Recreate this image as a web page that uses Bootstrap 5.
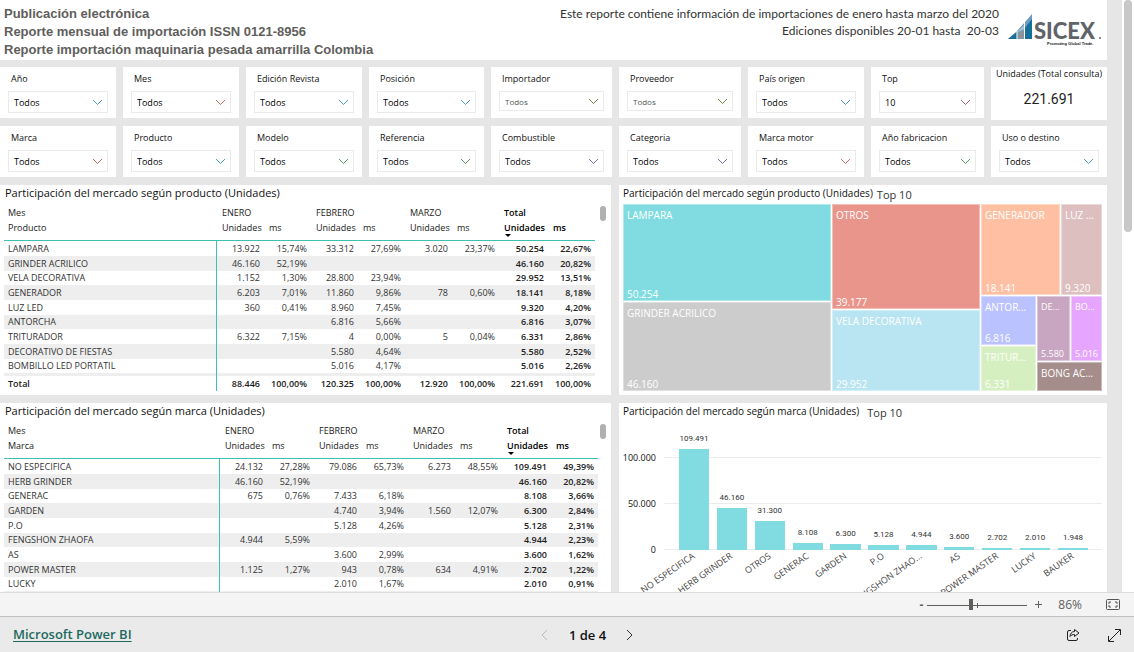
<!DOCTYPE html>
<html lang="es">
<head>
<meta charset="utf-8">
<meta name="viewport" content="width=device-width, initial-scale=1">
<title>Reporte mensual de importación</title>
<link rel="stylesheet" href="https://cdn.jsdelivr.net/npm/bootstrap@5.3.0/dist/css/bootstrap.min.css">
<script src="https://cdn.jsdelivr.net/npm/bootstrap@5.3.0/dist/js/bootstrap.bundle.min.js"></script>
<style>
  :root { --teal: #3cbfb4; --bar: #80dce0; }
  body { font-family: "Open Sans", "Noto Sans", sans-serif; font-size: 9px; line-height: 14px; color: #111; background: #fff; }
  h1, h2, p { margin: 0; }
  .report { background: #e6e6e6; padding-right: 15px; }
  .page-head { height: 60px; padding: 5px 5px 0 4px; }
  .page-head h1 { font: bold 13px/18px "Liberation Sans", Arial, sans-serif; color: #605e5c; white-space: nowrap; }
  .page-head p { font: 12px/17px Lato, "Open Sans", sans-serif; color: #333; white-space: pre; }
  .logo { width: 94px; height: 36px; margin: 6px 0 0 9px; }

  .filters { display: grid; grid-template-columns: 116fr 116fr 116fr 115fr 121fr 122fr 116fr 113fr 116fr; gap: 8px 7px; margin-top: 7px; }
  .slicer { background: #fff; padding: 5px 8px 6px; height: 51px; min-width: 0; }
  .slicer label { display: block; padding-left: 3px; margin-bottom: 5px; white-space: nowrap; color: #111; }
  .slicer select { -webkit-appearance: none; appearance: none; display: block; width: 100%; height: 22px; border: 1px solid #eaeaea; border-radius: 0; padding: 1px 20px 0 5px; font-size: 9px; line-height: 19px; color: #000; background: #fff no-repeat right 4px center; background-size: 11px 7px; }
  .slicer select.muted { font-size: 8px; color: #555; height: 20px; padding-top: 0; }
  .c-blue { background-image: url("data:image/svg+xml,%3Csvg xmlns='http://www.w3.org/2000/svg' viewBox='0 0 11 7'%3E%3Cpath d='M1 1l4.500 4.500L10 1' fill='none' stroke='%234a9cc9'/%3E%3C/svg%3E") !important; }
  .c-red { background-image: url("data:image/svg+xml,%3Csvg xmlns='http://www.w3.org/2000/svg' viewBox='0 0 11 7'%3E%3Cpath d='M1 1l4.500 4.500L10 1' fill='none' stroke='%23c9695a'/%3E%3C/svg%3E") !important; }
  .c-green { background-image: url("data:image/svg+xml,%3Csvg xmlns='http://www.w3.org/2000/svg' viewBox='0 0 11 7'%3E%3Cpath d='M1 1l4.500 4.500L10 1' fill='none' stroke='%23559568'/%3E%3C/svg%3E") !important; }
  .c-olive { background-image: url("data:image/svg+xml,%3Csvg xmlns='http://www.w3.org/2000/svg' viewBox='0 0 11 7'%3E%3Cpath d='M1 1l4.500 4.500L10 1' fill='none' stroke='%236b8a3a'/%3E%3C/svg%3E") !important; }
  .c-purple { background-image: url("data:image/svg+xml,%3Csvg xmlns='http://www.w3.org/2000/svg' viewBox='0 0 11 7'%3E%3Cpath d='M1 1l4.500 4.500L10 1' fill='none' stroke='%237466b5'/%3E%3C/svg%3E") !important; }
  .c-rose { background-image: url("data:image/svg+xml,%3Csvg xmlns='http://www.w3.org/2000/svg' viewBox='0 0 11 7'%3E%3Cpath d='M1 1l4.500 4.500L10 1' fill='none' stroke='%23a8607c'/%3E%3C/svg%3E") !important; }
  .kpi { background: #fff; height: 53px; text-align: center; white-space: nowrap; margin-bottom: -2px; }
  .kpi strong { display: block; font: 14px/16px Roboto, sans-serif; color: #222; margin-top: 10px; }

  .panels { display: grid; grid-template-columns: 611fr 488fr; gap: 8px; margin-top: 8px; }
  .panel { background: #fff; min-width: 0; height: 210px; padding: 0 5px 0 4px; }
  .panel h2 { font-size: 11px; line-height: 16px; color: #111; white-space: nowrap; padding-left: 1px; }
  .panel h2.narrow { font-size: 10px; padding-left: 0; }
  .panel h2 small { font-size: 11px; line-height: 20px; height: 16px; color: #333; margin-left: 4px; }

  .matrix { width: 100%; table-layout: fixed; border-collapse: separate; border-spacing: 0; margin-top: 4px; }
  .matrix th, .matrix td { padding: 0 4px 0 5px; height: 15px; line-height: 15px; white-space: nowrap; font-weight: 400; text-align: right; color: #333; }
  .matrix thead th { text-align: left; color: #222; position: relative; }
  .matrix thead tr:last-child th { height: 21px; padding-bottom: 5px; border-bottom: 1px solid var(--teal); }
  .matrix tbody tr:nth-child(3n) th, .matrix tbody tr:nth-child(3n) td { height: 14px; line-height: 14px; }
  .matrix tbody tr:nth-child(even) > * { background: #eee; }
  .matrix tr > :first-child { text-align: left; padding-left: 4px; }
  .matrix tbody tr > :first-child, .matrix tfoot tr > :first-child { border-right: 1px solid var(--teal); }
  .matrix .tot, .matrix tfoot tr > * { font-weight: 600; color: #222; }
  .matrix thead .tot { color: #000; }
  .matrix tbody tr.cut > * { height: 3px !important; line-height: 0 !important; }
  .matrix col.u { width: 47px; }
  .matrix col.tu { width: 49px; }
  .sort { position: absolute; left: 6px; top: 14px; border: 3px solid transparent; border-top-color: #000; border-bottom: 0; }
  .thumb { width: 6px; height: 15px; border-radius: 3px; background: #b0b0b0; margin: 5px 0 0 5px; flex: none; }
  .thumb.near { margin-left: 2px; }

  .treemap { height: 187px; margin-top: 3px; gap: 1px; color: #fff; font-size: 10px; }
  .treemap .g { display: flex; gap: 1px; min-width: 0; min-height: 0; flex-basis: 0; }
  .tile { display: flex; flex-direction: column; justify-content: space-between; min-width: 0; min-height: 0; flex-basis: 0; box-shadow: inset 0 0 0 1px rgba(255,255,255,.4); }
  .tile span { white-space: nowrap; flex: none; padding-left: 4px; }
  .tile span:first-child { padding-top: 4px; }
  .tile.dense span { font-size: 9px; }

  .axis { width: 33px; text-align: right; margin-top: 16px; }
  .axis div { height: 46px; line-height: 46px; font-size: 9px; margin-left: -4px; }
  .plot { height: 115px; margin: 16px 0 0 8px; padding: 0 10px 0 11px; background: repeating-linear-gradient(to top, #ececec 0 1px, transparent 1px 46px); }
  .slot { flex: 1 1 0; min-width: 0; height: 115px; position: relative; display: flex; flex-direction: column; justify-content: flex-end; align-items: center; }
  .slot .val { font: 8px/12px Roboto, sans-serif; color: #333; margin-bottom: 4px; flex: none; }
  .slot .col-bar { width: 80%; background: var(--bar); flex: none; }
  .slot .cat { position: absolute; top: 115px; right: 60%; transform: rotate(-35deg); transform-origin: top right; white-space: nowrap; color: #444; font-size: 9px; line-height: 12px; }

  .gutter { width: 12px; flex: none; background: #fff; padding: 0 2px; }
  .gutter div { height: 232px; background: #c8c8c8; border-radius: 4px; }
  .zoombar { height: 24px; background: #f4f4f4; border-top: 1px solid #dcdcdc; padding: 0 14px 0 0; color: #605e5c; font-size: 12px; line-height: 22px; }
  .zoombar button, .status button { border: 0; background: none; padding: 0; color: inherit; line-height: inherit; display: flex; align-items: center; justify-content: center; }
  .zoombar input { -webkit-appearance: none; appearance: none; width: 100px; height: 12px; margin: 0; background: linear-gradient(#605e5c, #605e5c) 0 6px / 100% 1px no-repeat, linear-gradient(#605e5c, #605e5c) 50px 4px / 1px 5px no-repeat; }
  .zoombar input::-webkit-slider-thumb { -webkit-appearance: none; width: 4px; height: 11px; background: #605e5c; }
  .status { height: 36px; background: #eaeaea; border-top: 1px solid #c0c0c0; padding: 1px 13px 0; color: #222; }
  .status a { color: #1c6a60; font-size: 13px; font-weight: 600; text-underline-offset: 2px; }
  .status nav { margin-left: 41px; gap: 18px; }
  .status .pg { font-size: 13px; font-weight: 600; color: #111; white-space: nowrap; }
</style>
</head>
<body class="d-flex flex-column vh-100 overflow-hidden">
<div class="d-flex flex-grow-1 overflow-hidden">
  <main class="report flex-grow-1 overflow-hidden">
    <header class="page-head bg-white d-flex">
      <h1 class="flex-grow-1">Publicación electrónica<br>Reporte mensual de importación ISSN 0121-8956<br>Reporte importación maquinaria pesada amarrilla Colombia</h1>
      <div class="text-end"><p>Este reporte contiene información de importaciones de enero hasta marzo del 2020</p><p>Ediciones disponibles 20-01 hasta  20-03</p></div>
      <svg class="logo flex-shrink-0" viewBox="0 0 94 36" role="img" aria-label="SICEX">
        <path d="M0 28L9 20 17 11 24 3V28z" fill="#6b9bbd"/>
        <path d="M0 28l9-7v7z" fill="#1c6d96"/><path d="M10 28v-6l6-3v9z" fill="#8b9299"/><path d="M10 20l7-7v5l-7 3z" fill="#a9c0d3"/><path d="M17 28V17l7-9v20z" fill="#146f9b"/>
        <path d="M9 20V28M16.500 11V28" stroke="#fff"/>
        <text x="26" y="28" font-family="Lato" font-weight="900" font-size="22" fill="#606468">SICEX</text>
        <circle cx="92" cy="27" r="1" fill="#606468"/>
        <text x="39" y="34" font-family="Liberation Sans" font-size="4" font-weight="bold" fill="#222">Promoting Global Trade.</text>
      </svg>
    </header>

    <section class="filters" id="filters" aria-label="Filtros"></section>

    <section class="panels">
      <article class="panel">
        <h2>Participación del mercado según producto (Unidades)</h2>
        <div class="d-flex"><div class="flex-grow-1"><table class="matrix" id="byProduct"></table></div><div class="thumb"></div></div>
      </article>
      <article class="panel">
        <h2 class="narrow d-flex">Participación del mercado según producto (Unidades)<small>Top 10</small></h2>
        <div class="treemap d-flex">
          <div class="g flex-column" style="flex-grow:208">
            <div class="tile" style="flex-grow:97;background:#80dce0"><span>LAMPARA</span><span>50.254</span></div>
            <div class="tile" style="flex-grow:89;background:#ccc"><span>GRINDER ACRILICO</span><span>46.160</span></div>
          </div>
          <div class="g flex-column" style="flex-grow:148">
            <div class="tile" style="flex-grow:105;background:#e9958b"><span>OTROS</span><span>39.177</span></div>
            <div class="tile" style="flex-grow:81;background:#b9e4f1"><span>VELA DECORATIVA</span><span>29.952</span></div>
          </div>
          <div class="g flex-column" style="flex-grow:121">
            <div class="g" style="flex-grow:91">
              <div class="tile" style="flex-grow:79;background:#febfa2"><span>GENERADOR</span><span>18.141</span></div>
              <div class="tile" style="flex-grow:41;background:#debfbf"><span>LUZ ...</span><span>9.320</span></div>
            </div>
            <div class="g" style="flex-grow:95">
              <div class="g flex-column" style="flex-grow:55">
                <div class="tile" style="flex-grow:49;background:#bac2ff"><span>ANTOR...</span><span>6.816</span></div>
                <div class="tile" style="flex-grow:45;background:#d5efc0"><span>TRITUR...</span><span>6.331</span></div>
              </div>
              <div class="g flex-column" style="flex-grow:65">
                <div class="g" style="flex-grow:65">
                  <div class="tile dense" style="flex-grow:33;background:#c8a5c1"><span>DE...</span><span>5.580</span></div>
                  <div class="tile dense" style="flex-grow:31;background:#e6a6ff"><span>BO...</span><span>5.016</span></div>
                </div>
                <div class="tile" style="flex-grow:29;background:#a58d8c"><span>BONG AC...</span></div>
              </div>
            </div>
          </div>
        </div>
      </article>
      <article class="panel">
        <h2>Participación del mercado según marca (Unidades)</h2>
        <div class="d-flex"><div class="flex-grow-1"><table class="matrix" id="byBrand"></table></div><div class="thumb near"></div></div>
      </article>
      <article class="panel">
        <h2 class="narrow d-flex">Participación del mercado según marca (Unidades)<small class="ps-1">Top 10</small></h2>
        <div class="d-flex">
          <div class="axis flex-shrink-0"><div>100.000</div><div>50.000</div><div>0</div></div>
          <div class="plot d-flex flex-grow-1" id="plot"></div>
        </div>
      </article>
    </section>
  </main>
  <div class="gutter"><div></div></div>
</div>

<div class="zoombar d-flex align-items-center justify-content-end flex-shrink-0">
  <button type="button" aria-label="Alejar" class="me-1 fw-bold">-</button>
  <input type="range" min="0" max="100" value="43" aria-label="Zoom">
  <button type="button" aria-label="Acercar" class="ms-2 me-3"><svg width="7" height="7" viewBox="0 0 7 7"><path d="M3.500 0v7M0 3.500h7" stroke="#605e5c"/></svg></button>
  <span class="me-4">86%</span>
  <button type="button" aria-label="Ajustar a la página"><svg width="14" height="11" viewBox="0 0 14 11" fill="none" stroke="#555"><rect x=".5" y=".5" width="13" height="10" rx="1"/><path d="M5 3H3v2M3 6v2h2M9 3h2v2M11 6v2H9"/></svg></button>
</div>
<footer class="status row gx-0 align-items-center flex-shrink-0 m-0">
  <div class="col"><a href="#">Microsoft Power BI</a></div>
  <nav class="col-auto d-flex align-items-center" aria-label="Páginas">
    <button type="button" aria-label="Anterior" disabled><svg width="12" height="12" viewBox="0 0 12 12" fill="none" stroke="#bbb"><path d="M8 1L3 6l5 5"/></svg></button>
    <span class="pg">1 de 4</span>
    <button type="button" aria-label="Siguiente"><svg width="12" height="12" viewBox="0 0 12 12" fill="none" stroke="#333"><path d="M3 1l5 5-5 5"/></svg></button>
  </nav>
  <div class="col d-flex justify-content-end gap-4">
    <button type="button" aria-label="Compartir" class="me-1"><svg width="14" height="14" viewBox="0 0 14 14" fill="none" stroke="#222"><path d="M5 2.500H3a1.500 1.500 0 0 0-1.500 1.500v7A1.500 1.500 0 0 0 3 12.500h7a1.500 1.500 0 0 0 1.500-1.500v-1"/><path d="M8.500 1.500L13 5 8.500 8.500v-2C6.500 6.500 5 7 4 8.500c.2-3 1.800-5 4.500-5z" stroke-linejoin="round"/></svg></button>
    <button type="button" aria-label="Pantalla completa"><svg width="13" height="13" viewBox="0 0 13 13" fill="none" stroke="#222"><path d="M1 12L12 1M7 .5h5.500V6M.5 7v5.500H6"/></svg></button>
  </div>
</footer>

<script>
const filters = [
  ['Año','blue'],['Mes','red'],['Edición Revista','blue'],['Posición','blue'],['Importador','olive','muted'],['Proveedor','olive','muted'],['País origen','blue'],['Top','rose'],null,
  ['Marca','red'],['Producto','blue'],['Modelo','green'],['Referencia','green'],['Combustible','purple'],['Categoria','purple'],['Marca motor','red'],['Año fabricacion','green'],['Uso o destino','blue']
];
document.getElementById('filters').innerHTML = filters.map((f, i) => f
  ? `<div class="slicer"><label for="f${i}">${f[0]}</label><select id="f${i}" class="c-${f[1]} ${f[2] || ''}"><option>${f[0] === 'Top' ? '10' : 'Todos'}</option></select></div>`
  : '<div class="kpi">Unidades (Total consulta)<strong>221.691</strong></div>').join('');

function matrix(id, label, rows, total) {
  const cells = r => r.slice(1).map((v, i) => `<td${i > 5 ? ' class="tot"' : ''}>${v}</td>`).join('');
  const row = r => `<tr><th scope="row">${r[0]}</th>${cells(r)}</tr>`;
  const pair = '<th>Unidades</th><th>ms</th>';
  document.getElementById(id).innerHTML =
    '<colgroup><col>' + '<col class="u">'.repeat(6) + '<col class="tu"><col class="u"></colgroup>' +
    '<thead><tr><th>Mes</th><th colspan="2">ENERO</th><th colspan="2">FEBRERO</th><th colspan="2">MARZO</th><th colspan="2" class="tot">Total</th></tr>' +
    `<tr><th>${label}</th>${pair.repeat(3)}<th class="tot">Unidades<i class="sort"></i></th><th class="tot">ms</th></tr></thead>` +
    '<tbody>' + rows.map(row).join('') + '<tr class="cut"><th></th>' + '<td></td>'.repeat(8) + '</tr></tbody>' +
    (total ? '<tfoot>' + row(total) + '</tfoot>' : '');
}
matrix('byProduct', 'Producto', [
  ['LAMPARA','13.922','15,74%','33.312','27,69%','3.020','23,37%','50.254','22,67%'],
  ['GRINDER ACRILICO','46.160','52,19%','','','','','46.160','20,82%'],
  ['VELA DECORATIVA','1.152','1,30%','28.800','23,94%','','','29.952','13,51%'],
  ['GENERADOR','6.203','7,01%','11.860','9,86%','78','0,60%','18.141','8,18%'],
  ['LUZ LED','360','0,41%','8.960','7,45%','','','9.320','4,20%'],
  ['ANTORCHA','','','6.816','5,66%','','','6.816','3,07%'],
  ['TRITURADOR','6.322','7,15%','4','0,00%','5','0,04%','6.331','2,86%'],
  ['DECORATIVO DE FIESTAS','','','5.580','4,64%','','','5.580','2,52%'],
  ['BOMBILLO LED PORTATIL','','','5.016','4,17%','','','5.016','2,26%']
], ['Total','88.446','100,00%','120.325','100,00%','12.920','100,00%','221.691','100,00%']);
matrix('byBrand', 'Marca', [
  ['NO ESPECIFICA','24.132','27,28%','79.086','65,73%','6.273','48,55%','109.491','49,39%'],
  ['HERB GRINDER','46.160','52,19%','','','','','46.160','20,82%'],
  ['GENERAC','675','0,76%','7.433','6,18%','','','8.108','3,66%'],
  ['GARDEN','','','4.740','3,94%','1.560','12,07%','6.300','2,84%'],
  ['P.O','','','5.128','4,26%','','','5.128','2,31%'],
  ['FENGSHON ZHAOFA','4.944','5,59%','','','','','4.944','2,23%'],
  ['AS','','','3.600','2,99%','','','3.600','1,62%'],
  ['POWER MASTER','1.125','1,27%','943','0,78%','634','4,91%','2.702','1,22%'],
  ['LUCKY','','','2.010','1,67%','','','2.010','0,91%']
]);

const bars = [['NO ESPECIFICA','109.491'],['HERB GRINDER','46.160'],['OTROS','31.300'],['GENERAC','8.108'],['GARDEN','6.300'],['P.O','5.128'],['FENGSHON ZHAO...','4.944'],['AS','3.600'],['POWER MASTER','2.702'],['LUCKY','2.010'],['BAUKER','1.948']];
document.getElementById('plot').innerHTML = bars.map(([name, v]) =>
  `<div class="slot"><span class="val">${v}</span><div class="col-bar" style="height:${v.replace('.', '') / 1250}%"></div><span class="cat">${name}</span></div>`).join('');
</script>
</body>
</html>
